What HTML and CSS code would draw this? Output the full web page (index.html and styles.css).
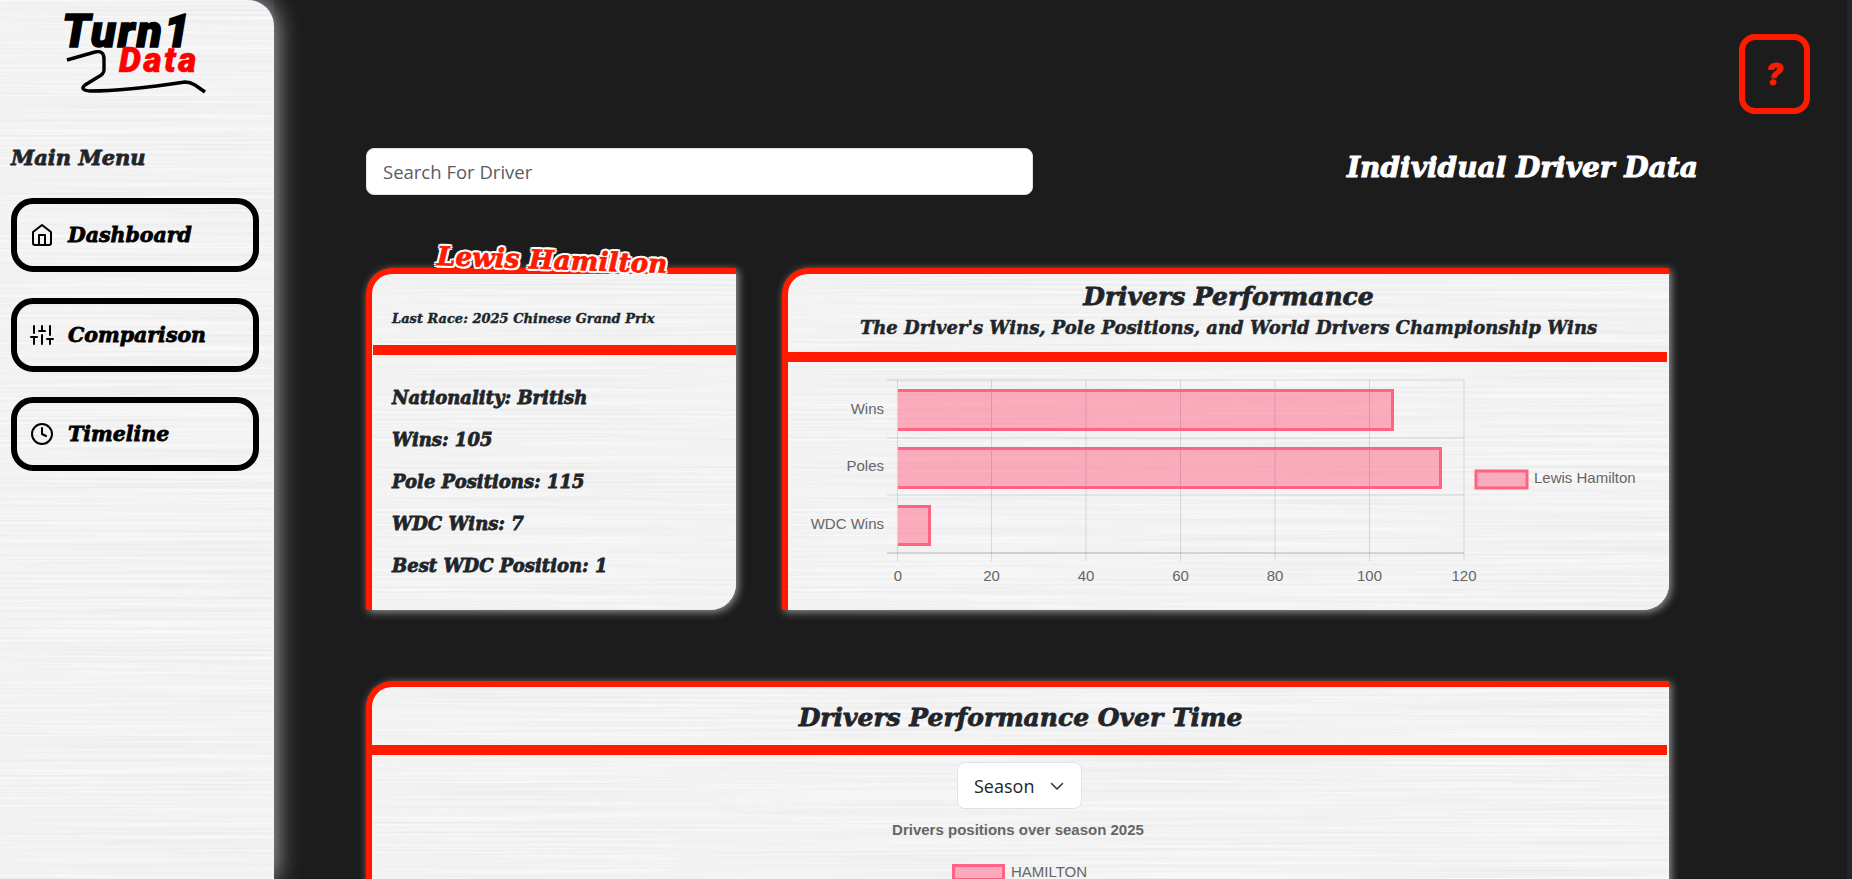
FILE: index.html
```html
<!DOCTYPE html>
<html lang="en">
<head>
<meta charset="utf-8">
<title>Turn1 Data</title>
<link rel="stylesheet" href="styles.css">
</head>
<body>
<aside class="sidebar metal">
  <div class="logo">
    <div class="logo-turn">Turn1</div>
    <div class="logo-data">Data</div>
    <svg class="logo-track" width="150" height="50" viewBox="0 0 150 50" aria-hidden="true">
      <path d="M2 11 L30 3 Q39 1 39 10 L39 21 Q39 25 33 28 L20 36 Q14 41 25 42 Q60 42 120 33 Q125 33 130 36 L140 43" fill="none" stroke="#000" stroke-width="3.4"/>
    </svg>
  </div>
  <h2 class="menu-title">Main Menu</h2>
  <nav class="menu">
    <a class="menu-btn">
      <svg class="menu-icon" viewBox="0 0 24 24"><path d="M3 9l9-7 9 7v11a2 2 0 0 1-2 2H5a2 2 0 0 1-2-2z"/><polyline points="9 22 9 12 15 12 15 22"/></svg>
      <span>Dashboard</span>
    </a>
    <a class="menu-btn">
      <svg class="menu-icon" viewBox="0 0 24 24"><line x1="4" y1="21" x2="4" y2="14"/><line x1="4" y1="10" x2="4" y2="3"/><line x1="12" y1="21" x2="12" y2="12"/><line x1="12" y1="8" x2="12" y2="3"/><line x1="20" y1="21" x2="20" y2="16"/><line x1="20" y1="12" x2="20" y2="3"/><line x1="1" y1="14" x2="7" y2="14"/><line x1="9" y1="8" x2="15" y2="8"/><line x1="17" y1="16" x2="23" y2="16"/></svg>
      <span>Comparison</span>
    </a>
    <a class="menu-btn">
      <svg class="menu-icon" viewBox="0 0 24 24"><circle cx="12" cy="12" r="10"/><polyline points="12 6 12 12 16 14"/></svg>
      <span>Timeline</span>
    </a>
  </nav>
</aside>

<main class="main">
  <div class="topbar"><button class="help">?</button></div>
  <div class="search-row">
    <input class="search" type="text" placeholder="Search For Driver">
    <h1 class="page-title">Individual Driver Data</h1>
  </div>

  <div class="card-row">
    <section class="card card-driver metal">
      <div class="driver-name">Lewis Hamilton</div>
      <div class="last-race">Last Race: 2025 Chinese Grand Prix</div>
      <div class="rule rule-driver"></div>
      <ul class="stats">
        <li>Nationality: British</li>
        <li>Wins: 105</li>
        <li>Pole Positions: 115</li>
        <li>WDC Wins: 7</li>
        <li>Best WDC Position: 1</li>
      </ul>
    </section>

    <section class="card card-perf metal">
      <header class="card-head">
        <h2 class="card-title">Drivers Performance</h2>
        <h3 class="card-sub">The Driver's Wins, Pole Positions, and World Drivers Championship Wins</h3>
      </header>
      <div class="rule"></div>
      <svg class="chart" width="880" height="247" viewBox="0 0 880 247">
        <g class="bars">
          <rect x="110" y="28" width="495" height="40"/>
          <rect x="110" y="86" width="543" height="40"/>
          <rect x="110" y="144" width="32" height="39"/>
          <rect x="688" y="109" width="51" height="17"/>
        </g>
        <g class="grid">
          <line x1="109.5" y1="18" x2="109.5" y2="199"/><line x1="203.5" y1="18" x2="203.5" y2="199"/><line x1="298" y1="18" x2="298" y2="199"/><line x1="392.5" y1="18" x2="392.5" y2="199"/><line x1="487" y1="18" x2="487" y2="199"/><line x1="581.5" y1="18" x2="581.5" y2="199"/><line x1="676" y1="18" x2="676" y2="199"/>
          <line x1="99" y1="18" x2="676" y2="18"/><line x1="99" y1="76" x2="676" y2="76"/><line x1="99" y1="133" x2="676" y2="133"/>
          <line class="axis" x1="99" y1="191" x2="676" y2="191"/>
        </g>
        <g class="bar-lines">
          <polyline points="110,28.5 604.5,28.5 604.5,67.5 110,67.5"/>
          <polyline points="110,86.5 652.5,86.5 652.5,125.5 110,125.5"/>
          <polyline points="110,144.5 141.5,144.5 141.5,182.5 110,182.5"/>
          <rect x="688" y="109" width="51" height="17"/>
        </g>
        <g class="labels-y">
          <text x="96" y="52">Wins</text>
          <text x="96" y="109">Poles</text>
          <text x="96" y="167">WDC Wins</text>
        </g>
        <g class="labels-x">
          <text x="110" y="219">0</text><text x="203.5" y="219">20</text><text x="298" y="219">40</text><text x="392.5" y="219">60</text><text x="487" y="219">80</text><text x="581.5" y="219">100</text><text x="676" y="219">120</text>
        </g>
        <text class="legend-text" x="746" y="121">Lewis Hamilton</text>
      </svg>
    </section>
  </div>

  <section class="card card-time metal">
    <header class="card-head card-head-time">
      <h2 class="card-title">Drivers Performance Over Time</h2>
    </header>
    <div class="rule rule-time"></div>
    <div class="time-body">
      <div class="select">Season
        <svg class="chev" width="16" height="16" viewBox="0 0 16 16"><path d="M2.5 5.5 L8 11 L13.5 5.5" fill="none" stroke="#343a40" stroke-width="1.6" stroke-linecap="round" stroke-linejoin="round"/></svg>
      </div>
      <div class="time-title">Drivers positions over season 2025</div>
      <div class="time-legend"><span class="legend-box"></span>HAMILTON</div>
    </div>
  </section>
</main>
</body>
</html>
```
FILE: styles.css
```css
* { box-sizing: border-box; }
html, body { height: 100%; margin: 0; overflow: hidden; }
body {
  display: flex;
  background: #22252c;
  color: #212529;
  font-family: "Open Sans", "Noto Sans", sans-serif;
}

.metal {
  background-color: #e8e8e8;
  background-image: url("data:image/svg+xml,%3Csvg xmlns='http://www.w3.org/2000/svg' width='1400' height='900'%3E%3Cfilter id='n' x='0' y='0' width='100%25' height='100%25'%3E%3CfeTurbulence type='fractalNoise' baseFrequency='0.003 0.4' numOctaves='3' seed='4'/%3E%3CfeColorMatrix values='0.17 0 0 0 0.81 0.17 0 0 0 0.81 0.17 0 0 0 0.81 0 0 0 0 1'/%3E%3C/filter%3E%3Crect width='1400' height='900' filter='url(%23n)'/%3E%3C/svg%3E");
}

/* ---------- heavy display face ---------- */
.menu-title, .menu-btn span, .page-title, .driver-name, .last-race,
.stats, .card-title, .card-sub {
  font-family: "DejaVu Serif", serif;
  font-style: italic;
  font-weight: 700;
  margin: 0;
  -webkit-text-stroke: 0.8px currentColor;
}

/* ---------- sidebar ---------- */
.sidebar {
  flex: 0 0 274px;
  height: 100%;
  border-top-right-radius: 26px;
  box-shadow: 0 0 26px rgba(255, 255, 255, 0.75);
  padding: 14px 15px 0 11px;
  position: relative;
  z-index: 1;
}
.logo { position: relative; height: 119px; margin-left: 51px; }
.logo-turn {
  font: italic 900 46px/34px Roboto, sans-serif;
  color: #000;
  letter-spacing: 2px;
  -webkit-text-stroke: 1.4px #000;
}
.logo-data {
  font: italic 900 35px/26px Roboto, sans-serif;
  color: #f00;
  letter-spacing: 2.5px;
  margin: 0 0 0 57px;
  -webkit-text-stroke: 0.6px #f00;
}
.logo-track { position: absolute; left: 3px; top: 35px; }

.menu-title { font-size: 21px; line-height: 26px; margin: 12px 0 27px; }
.menu { display: flex; flex-direction: column; gap: 25.5px; }
.menu-btn {
  display: flex;
  align-items: center;
  gap: 14px;
  height: 74px;
  padding-left: 13px;
  border: 6px solid #000;
  border-radius: 22px;
  color: #000;
}
.menu-btn span { font-size: 20.5px; }
.menu-icon {
  width: 24px; height: 24px;
  fill: none; stroke: #000; stroke-width: 2;
  stroke-linecap: round; stroke-linejoin: round;
}

/* ---------- main ---------- */
.main {
  flex: 1;
  margin-right: 5px;
  height: 100%;
  background: #1c1c1c;
  padding: 34px 37px 0 92px;
  overflow: hidden;
}
.topbar { display: flex; justify-content: flex-end; height: 80px; }
.help {
  width: 71px; height: 80px;
  background: none;
  border: 6px solid #ff1a00;
  border-radius: 16px;
  color: #ff1a00;
  font: italic 900 32px/1 Roboto, sans-serif;
  padding: 0;
  -webkit-text-stroke: 1px #ff1a00;
}
.search-row {
  display: grid;
  grid-template-columns: 667px 1fr;
  align-items: center;
  margin-top: 34px;
  height: 47px;
}
.search {
  height: 47px;
  border: 1px solid #dee2e6;
  border-radius: 8px;
  padding: 0 16px;
  font: 18.5px "Open Sans", sans-serif;
  background: #fff;
}
.search::placeholder { color: #595c5f; opacity: 1; }
.page-title { color: #fff; font-size: 28px; line-height: 36px; margin: -8px 0 0 314px; white-space: nowrap; -webkit-text-stroke: 1px #fff; }

.card-row { display: flex; gap: 46px; margin-top: 73px; align-items: flex-start; }
.card {
  position: relative;
  border-top: 6px solid #ff1a00;
  border-left: 6px solid #ff1a00;
  border-top-left-radius: 26px;
  border-bottom-right-radius: 26px;
  box-shadow: 2px 2px 9px rgba(255, 255, 255, 0.55);
}
.rule { height: 10px; background: #ff1a00; width: calc(100% - 2px); }

.card-driver { flex: 0 0 370px; height: 342px; }
.driver-name {
  position: absolute;
  left: 65px; top: -29px;
  font-size: 26px;
  line-height: 30px;
  letter-spacing: 0.2px;
  white-space: nowrap;
  color: #ff1a00;
  transform: rotate(2deg);
  -webkit-text-stroke: 0.8px #ff1a00;
  text-shadow: 2.5px 0 #fff, -2.5px 0 #fff, 0 2.5px #fff, 0 -2.5px #fff, 2px 2px #fff, -2px -2px #fff, 2px -2px #fff, -2px 2px #fff;
}
.last-race { font-size: 13px; line-height: 18px; padding: 36px 0 17px 20px; height: 71px; -webkit-text-stroke: 0.4px currentColor; }
.rule-driver { margin-left: 1px; width: auto; }
.stats { list-style: none; padding: 22px 0 0 20px; font-size: 18px; line-height: 42px; }

.card-perf { flex: 0 0 887px; height: 342px; }
.card-head { height: 78px; text-align: center; padding-top: 7px; }
.card-title { font-size: 25px; line-height: 32px; white-space: nowrap; }
.card-sub { font-size: 18px; line-height: 26px; margin-top: 2px; white-space: nowrap; -webkit-text-stroke: 0.5px currentColor; }
.chart { display: block; font-family: "Liberation Sans", Arial, sans-serif; font-size: 15px; }
.grid line { stroke: #000; stroke-opacity: 0.12; stroke-width: 1; }
.grid .axis { stroke-opacity: 0.27; }
.bars rect { fill: rgba(255, 99, 132, 0.5); }
.bar-lines polyline, .bar-lines rect { fill: none; stroke: #ff6384; stroke-width: 3; }
.labels-y text { text-anchor: end; fill: #666; }
.labels-x text { text-anchor: middle; fill: #666; }
.legend-text { fill: #666; }

.card-time { width: 1303px; height: 700px; margin-top: 71px; }
.card-head-time { height: 58px; padding-top: 15px; }
.rule-time { width: calc(100% - 2px); }
.time-body { display: flex; flex-direction: column; align-items: center; padding: 7px 0 0; margin-left: -2px; }
.select {
  display: flex; align-items: center; justify-content: space-between;
  width: 125px; height: 47px;
  padding: 0 16px;
  background: #fff;
  border: 1px solid #dee2e6;
  border-radius: 8px;
  font-size: 18px;
}
.time-title { font: 700 15px/18px "Liberation Sans", Arial, sans-serif; color: #666; margin-top: 12px; margin-left: -3px; }
.time-legend {
  display: flex; align-items: center; gap: 6px;
  font: 15px/18px "Liberation Sans", Arial, sans-serif;
  color: #666;
  margin-top: 24px;
}
.legend-box { width: 53px; height: 17px; background: rgba(255, 99, 132, 0.5); border: 3px solid #ff6384; }
```
